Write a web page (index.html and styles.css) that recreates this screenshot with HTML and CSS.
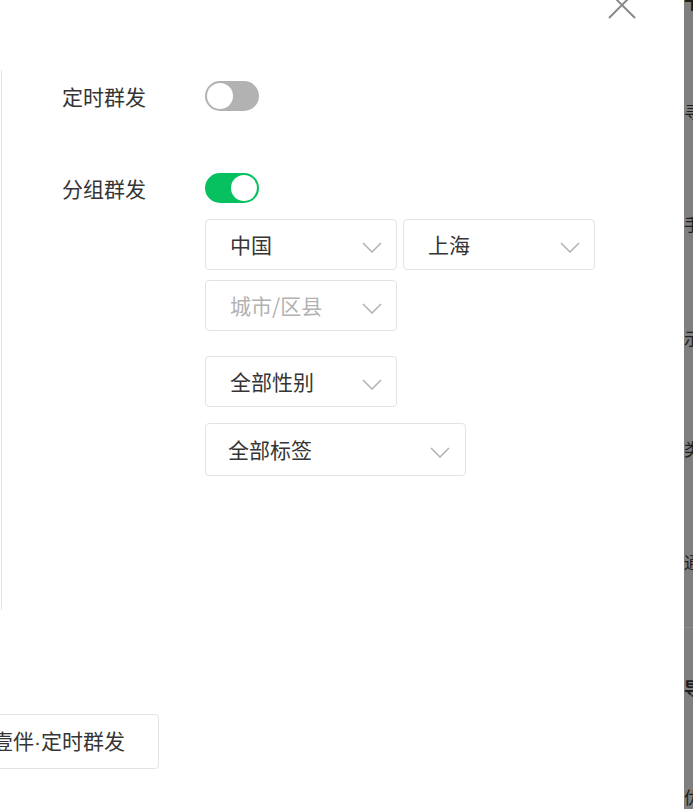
FILE: index.html
```html
<!DOCTYPE html>
<html lang="zh-CN">
<head>
<meta charset="utf-8">
<link rel="stylesheet" href="styles.css">
</head>
<body>
<div class="page">
  <div class="panel">
    <button class="close" aria-label="关闭">
      <svg width="30" height="30" viewBox="0 0 30 30"><path d="M2 2 L28 28 M28 2 L2 28" stroke="#8a8a8a" stroke-width="2" fill="none"/></svg>
    </button>
    <div class="section">
      <div class="row row-first">
        <div class="label">定时群发</div>
        <div class="ctrl">
          <span class="toggle"><span class="knob"></span></span>
        </div>
      </div>
      <div class="row row-second">
        <div class="label">分组群发</div>
        <div class="ctrl">
          <span class="toggle on"><span class="knob"></span></span>
          <div class="region">
            <div class="select"><span>中国</span><svg class="chev" width="20" height="11" viewBox="0 0 20 11"><polyline points="1,1 10,10 19,1" fill="none" stroke="#b2b2b2" stroke-width="1.5"/></svg></div>
            <div class="select"><span>上海</span><svg class="chev" width="20" height="11" viewBox="0 0 20 11"><polyline points="1,1 10,10 19,1" fill="none" stroke="#b2b2b2" stroke-width="1.5"/></svg></div>
            <div class="select placeholder"><span>城市/区县</span><svg class="chev" width="20" height="11" viewBox="0 0 20 11"><polyline points="1,1 10,10 19,1" fill="none" stroke="#b2b2b2" stroke-width="1.5"/></svg></div>
          </div>
          <div class="select gender"><span>全部性别</span><svg class="chev" width="20" height="11" viewBox="0 0 20 11"><polyline points="1,1 10,10 19,1" fill="none" stroke="#b2b2b2" stroke-width="1.5"/></svg></div>
          <div class="select tags"><span>全部标签</span><svg class="chev" width="20" height="11" viewBox="0 0 20 11"><polyline points="1,1 10,10 19,1" fill="none" stroke="#b2b2b2" stroke-width="1.5"/></svg></div>
        </div>
      </div>
    </div>
    <button class="submit">壹伴<span class="dot">·</span>定时群发</button>
  </div>
  <div class="strip">
    <div class="frag bold f1">卡</div>
    <div class="frag f2">寻</div>
    <div class="frag f3">手</div>
    <div class="frag f4">示</div>
    <div class="frag f5">类</div>
    <div class="frag f6">通</div>
    <div class="divider"></div>
    <div class="frag bold f7">导</div>
    <div class="frag f8">优</div>
  </div>
</div>
</body>
</html>
```

FILE: styles.css
```css
* { box-sizing: border-box; }
html, body { margin: 0; padding: 0; }
body {
  font-family: "Noto Sans CJK SC", "Noto Sans", sans-serif;
  color: #353535;
  background: #7f7f7f;
  overflow: hidden;
}
.page {
  display: flex;
  width: 693px;
  height: 809px;
}
.panel {
  position: relative;
  width: 684px;
  height: 809px;
  background: #fff;
  padding-top: 70px;
}
.close {
  position: absolute;
  top: -10px;
  right: 47px;
  width: 30px;
  height: 30px;
  padding: 0;
  border: 0;
  background: none;
}
.close svg { display: block; }
.section {
  margin-left: 1px;
  border-left: 1px solid #e6e6e6;
  height: 540px;
  padding-left: 60px;
  padding-top: 11px;
}
.row {
  display: flex;
  align-items: flex-start;
}
.row-second { margin-top: 62px; }
.label {
  width: 143px;
  font-size: 21px;
  line-height: 30px;
  color: #353535;
}
.ctrl {
  display: flex;
  flex-direction: column;
  align-items: flex-start;
}
.toggle {
  position: relative;
  display: block;
  width: 54px;
  height: 30px;
  border-radius: 15px;
  background: #b2b2b3;
  padding: 2px;
}
.toggle .knob {
  display: block;
  width: 26px;
  height: 26px;
  border-radius: 50%;
  background: #fff;
}
.toggle.on { background: #07c160; }
.toggle.on .knob { margin-left: 24px; }
.region {
  display: flex;
  flex-wrap: wrap;
  width: 390px;
  gap: 10px 6px;
  margin-top: 16px;
}
.select {
  display: flex;
  align-items: center;
  justify-content: space-between;
  width: 192px;
  height: 51px;
  border: 1px solid #e3e3e3;
  border-radius: 4px;
  padding: 0 14px 0 24px;
  font-size: 21px;
  color: #353535;
  background: #fff;
}
.select span { margin-top: -2px; }
.select .chev { margin-top: 5px; flex: none; }
.select.placeholder { color: #b2b2b2; }
.gender { margin-top: 25px; }
.tags {
  margin-top: 16px;
  width: 261px;
  height: 53px;
  padding-left: 22px;
  padding-right: 15px;
}
.submit {
  display: block;
  margin-top: 104px;
  margin-left: -42px;
  height: 55px;
  padding: 0 33px 3px;
  border: 1px solid #e3e3e3;
  border-radius: 4px;
  background: #fff;
  font-family: "Noto Sans CJK SC", "Noto Sans", sans-serif;
  font-size: 21px;
  color: #353535;
}
.submit .dot {
  font-family: "Liberation Sans", sans-serif;
}
.strip {
  width: 9px;
  height: 809px;
  background: #7f7f7f;
  overflow: hidden;
  display: flex;
  flex-direction: column;
}
.frag {
  font-size: 17px;
  line-height: 20px;
  height: 20px;
  color: #1e1e1e;
  white-space: nowrap;
  flex: none;
}
.frag.bold { font-weight: 700; }
.f1 { margin-top: -8px; }
.f2 { margin-top: 90px; }
.f3 { margin-top: 92px; }
.f4 { margin-top: 94px; }
.f5 { margin-top: 91px; }
.f6 { margin-top: 93px; }
.divider { flex: none; height: 1px; background: #8c8c8c; margin-top: 55px; }
.f7 { margin-top: 50px; }
.f8 { margin-top: 89px; }
```
